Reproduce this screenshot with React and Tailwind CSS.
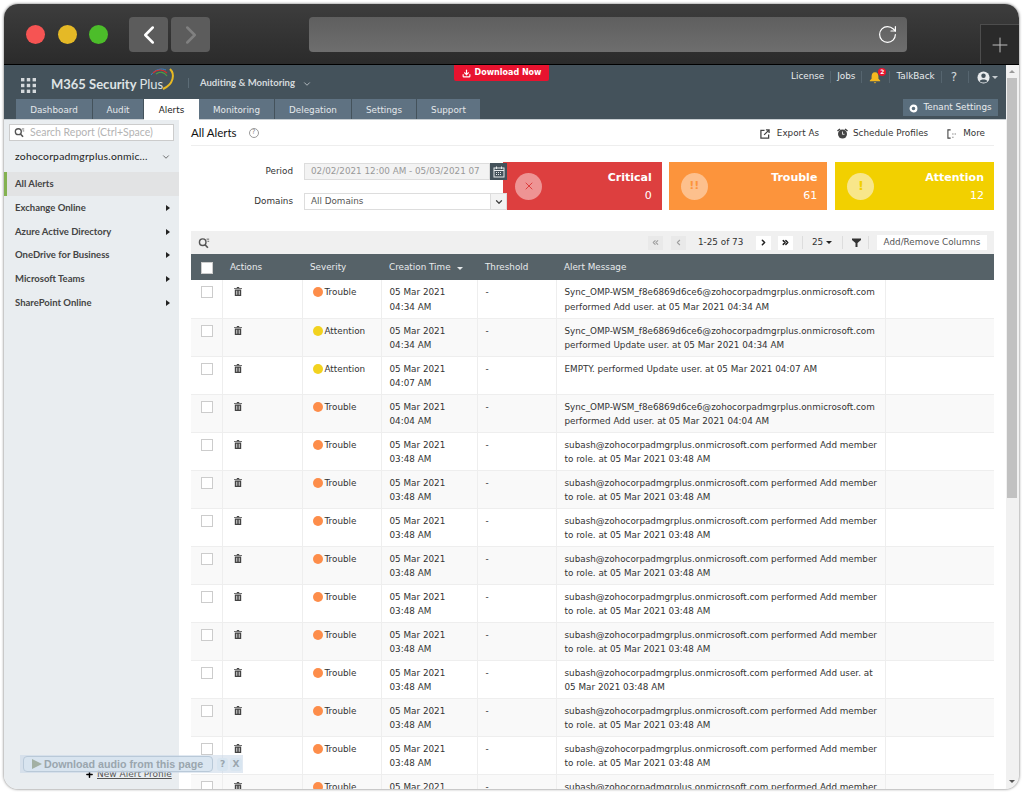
import { RotateCw, Plus, ChevronLeft, ChevronRight, ChevronsLeft, ChevronsRight, ChevronDown, X, Download } from "lucide-react";

const dejavu = "font-['DejaVu_Sans',sans-serif]";
const lato = "font-['Lato',sans-serif]";

const tabs = [
  { name: "Dashboard", w: "w-[76px]" },
  { name: "Audit", w: "w-[50px]" },
  { name: "Alerts", w: "w-[55px]", active: true },
  { name: "Monitoring", w: "w-[75px]" },
  { name: "Delegation", w: "w-[76px]" },
  { name: "Settings", w: "w-[64px]" },
  { name: "Support", w: "w-[63px]" },
];

const menu = ["Exchange Online", "Azure Active Directory", "OneDrive for Business", "Microsoft Teams", "SharePoint Online"];

const sync = "Sync_OMP-WSM_f8e6869d6ce6@zohocorpadmgrplus.onmicrosoft.com";
const subash = "subash@zohocorpadmgrplus.onmicrosoft.com performed Add member";
const memberRow = { sev: "Trouble", time: "03:48 AM", l1: subash, l2: "to role. at 05 Mar 2021 03:48 AM" };

const rows = [
  { sev: "Trouble", time: "04:34 AM", l1: sync, l2: "performed Add user. at 05 Mar 2021 04:34 AM" },
  { sev: "Attention", time: "04:34 AM", l1: sync, l2: "performed Update user. at 05 Mar 2021 04:34 AM" },
  { sev: "Attention", time: "04:07 AM", l1: "EMPTY. performed Update user. at 05 Mar 2021 04:07 AM" },
  { sev: "Trouble", time: "04:04 AM", l1: sync, l2: "performed Add user. at 05 Mar 2021 04:04 AM" },
  memberRow,
  memberRow,
  memberRow,
  memberRow,
  memberRow,
  memberRow,
  { sev: "Trouble", time: "03:48 AM", l1: "subash@zohocorpadmgrplus.onmicrosoft.com performed Add user. at", l2: "05 Mar 2021 03:48 AM" },
  memberRow,
  memberRow,
  memberRow,
];

function SearchIcon({ className }) {
  return (
    <svg viewBox="0 0 14 14" className={className} fill="none" stroke="currentColor">
      <circle cx="5.5" cy="6" r="3.8" strokeWidth="1.7" />
      <path d="M8.2 9 L11.5 12.5" strokeWidth="2" />
      <path d="M10 2.5h3M11 5h2" strokeWidth="1" />
    </svg>
  );
}

function Trash() {
  return (
    <svg viewBox="0 0 10 11" className="w-[8px] h-[9px] text-[#444]" fill="currentColor">
      <path d="M3.5 0h3v1H10v1.2H0V1h3.5z" />
      <path d="M1 3h8v8H1z M3 4.5v5h1v-5z M6 4.5v5h1v-5z" fillRule="evenodd" />
    </svg>
  );
}

function Card({ title, count, bg, circle, mark, ml = "" }) {
  return (
    <div className={`w-[159px] h-[48px] flex items-center pl-[12px] pr-[10px] ${bg} ${ml}`}>
      <div className={`w-[27px] h-[27px] rounded-full flex items-center justify-center shrink-0 ${circle}`}>{mark}</div>
      <div className="flex-1 text-right text-white pt-[2px]">
        <div className="text-[11px] font-bold leading-[14px]">{title}</div>
        <div className="text-[11px] leading-[14px] mt-[4px]">{count}</div>
      </div>
    </div>
  );
}

function PageBtn({ children, dim, className = "" }) {
  return (
    <span className={`w-[15px] h-[14px] flex items-center justify-center ${dim ? "bg-[#e9e9e9] text-[#a0a0a0]" : "bg-white text-[#222]"} ${className}`}>
      {children}
    </span>
  );
}

export default function App() {
  return (
    <div className={`w-[1024px] h-[793px] bg-white pl-[4px] pt-[4px] overflow-hidden ${dejavu}`}>
      <div className="relative w-[1015px] h-[785px] rounded-[14px] overflow-hidden flex flex-col bg-white shadow-[0_0_3px_rgba(0,0,0,0.6)]">

        {/* browser chrome */}
        <div className="h-[61px] shrink-0 bg-gradient-to-b from-[#3d3d3d] to-[#2b2b2b] border-b border-black flex items-start">
          <div className="flex gap-[12.5px] ml-[22px] mt-[21px]">
            <span className="w-[19px] h-[19px] rounded-full bg-[#f65453]" />
            <span className="w-[19px] h-[19px] rounded-full bg-[#e5b926]" />
            <span className="w-[19px] h-[19px] rounded-full bg-[#4cbd2a]" />
          </div>
          <div className="flex gap-[3px] ml-[21px] mt-[13px]">
            <span className="w-[39px] h-[35px] rounded-[4px] bg-[#5c5c5c] flex items-center justify-center">
              <ChevronLeft size={30} strokeWidth={2} className="text-white" />
            </span>
            <span className="w-[39px] h-[35px] rounded-[4px] bg-[#5c5c5c] flex items-center justify-center">
              <ChevronRight size={30} strokeWidth={2} className="text-[#808080]" />
            </span>
          </div>
          <div className="w-[599px] h-[35px] ml-[99px] mt-[13px] rounded-[4px] bg-gradient-to-b from-[#5f5f5f] to-[#6e6e6e] flex items-center justify-end pr-[9px]">
            <RotateCw size={21} strokeWidth={1.4} className="text-white" />
          </div>
          <div className="w-[39px] h-[40px] ml-[73px] mt-[20px] bg-[#2a2a2a] border-l border-t border-[#4d4d4d] flex items-center justify-center">
            <Plus size={24} strokeWidth={1} className="text-[#bdbdbd]" />
          </div>
        </div>

        <div className="flex flex-1 min-h-0">
          <div className="w-[1002px] flex flex-col min-h-0">

            {/* app header */}
            <div className="relative h-[55px] shrink-0 bg-[#44525b] border-b border-[#c9cfd3]">
              <div className="absolute left-[450px] top-0 w-[95px] h-[16px] bg-[#e8132f] rounded-b-[2px] flex items-center justify-center gap-[4px] text-white text-[8px] font-bold">
                <Download size={9} strokeWidth={3} />
                Download Now
              </div>
              <div className="h-[34px] flex items-start">
                <svg viewBox="0 0 15 15" className="w-[15px] h-[15px] ml-[17px] mt-[13px] text-[#d5d9dc]" fill="currentColor">
                  <rect x="0" y="0" width="3.4" height="3.4" /><rect x="5.8" y="0" width="3.4" height="3.4" /><rect x="11.6" y="0" width="3.4" height="3.4" />
                  <rect x="0" y="5.8" width="3.4" height="3.4" /><rect x="5.8" y="5.8" width="3.4" height="3.4" /><rect x="11.6" y="5.8" width="3.4" height="3.4" />
                  <rect x="0" y="11.6" width="3.4" height="3.4" /><rect x="5.8" y="11.6" width="3.4" height="3.4" /><rect x="11.6" y="11.6" width="3.4" height="3.4" />
                </svg>
                <div className="relative ml-[15px] mt-[7px] w-[129px]">
                  <span className={`${lato} text-[13px] font-bold text-[#dfe3e5] leading-[18px] whitespace-nowrap`}>
                    M365 Security <span className="font-normal">Plus</span>
                  </span>
                  <svg viewBox="0 0 28 24" className="absolute left-[99px] top-[-4px] w-[28px] h-[24px]" fill="none">
                    <path d="M1 7 C5 1 12 0 16 2" stroke="#3d7fc4" strokeWidth="1" />
                    <path d="M3 5 C7 1 13 1 17 5" stroke="#d3312f" strokeWidth="1.2" />
                    <path d="M6 6 C10 3 14 4 17 8" stroke="#4d9e44" strokeWidth="1.2" />
                    <path d="M20 1 C25 6 24 16 13 21" stroke="#e8b923" strokeWidth="2" />
                  </svg>
                </div>
                <span className="w-px h-[10px] bg-[#5c6c76] ml-[8px] mt-[13px]" />
                <span className={`${lato} ml-[11px] mt-[10px] text-[9.5px] font-bold text-[#d5dadd] leading-[16px] whitespace-nowrap`}>Auditing &amp; Monitoring</span>
                <ChevronDown size={10} className="text-[#c5cbcf] ml-[7px] mt-[14px]" />
                <div className="ml-auto mr-[8px] mt-[4px] h-[16px] flex items-center text-[8.8px] text-[#e8ebed] whitespace-nowrap">
                  <span>License</span>
                  <span className="w-px h-[12px] bg-[#56656f] mx-[6px]" />
                  <span>Jobs</span>
                  <span className="w-px h-[12px] bg-[#56656f] ml-[6px] mr-[7px]" />
                  <span className="relative w-[14px] h-[14px]">
                    <svg viewBox="0 0 14 14" className="w-[12px] h-[13px] mt-[1px]" fill="#f5b81f">
                      <path d="M7 1 C4 1 3 3.5 3 6 V8.5 L1 10.5 V11.5 H13 V10.5 L11 8.5 V6 C11 3.5 10 1 7 1z M5.5 12.5 H8.5 L7 14z" />
                    </svg>
                    <span className="absolute right-[-3px] top-[-2px] w-[8px] h-[8px] rounded-full bg-[#e8132f] text-white text-[6px] font-bold leading-[8px] text-center">2</span>
                  </span>
                  <span className="w-px h-[12px] bg-[#56656f] ml-[6px] mr-[6px]" />
                  <span>TalkBack</span>
                  <span className="w-px h-[12px] bg-[#56656f] mx-[6px]" />
                  <span className="text-[12px] text-[#d5dadd] mx-[3px]">?</span>
                  <span className="w-px h-[12px] bg-[#56656f] mx-[8px]" />
                  <svg viewBox="0 0 14 14" className="w-[13px] h-[13px]">
                    <circle cx="7" cy="7" r="6.5" fill="#e8ebed" />
                    <circle cx="7" cy="5.2" r="2.4" fill="#44525b" />
                    <path d="M2.8 11 C3.5 8.5 10.5 8.5 11.2 11 C9.5 12.8 4.5 12.8 2.8 11z" fill="#44525b" />
                  </svg>
                  <span className="ml-[2px] w-0 h-0 border-x-[3px] border-x-transparent border-t-[3px] border-t-[#c5cbcf]" />
                </div>
              </div>
              <div className="h-[20px] flex items-start pl-[12px] pr-[8px]">
                {tabs.map((t) => (
                  <div
                    key={t.name}
                    className={`${t.w} pt-[3px] flex items-center justify-center text-[8.8px] ${t.active ? "h-[21px] bg-white text-[#222]" : "h-[20px] mr-px bg-[#5f7282] text-[#e4e8eb]"}`}
                  >
                    {t.name}
                  </div>
                ))}
                <div className="ml-auto h-[17px] w-[95px] pt-px bg-[#5a6e7d] flex items-center justify-center gap-[5px] text-[8.8px] text-[#e8ebed] whitespace-nowrap">
                  <svg viewBox="0 0 10 10" className="w-[9px] h-[9px]" fill="none" stroke="#fff">
                    <circle cx="5" cy="5" r="3.2" strokeWidth="2.4" />
                  </svg>
                  Tenant Settings
                </div>
              </div>
            </div>

            <div className="flex flex-1 min-h-0">
              {/* sidebar */}
              <aside className={`w-[175px] shrink-0 bg-[#e9edf0] flex flex-col ${lato}`}>
                <div className="mx-[5px] mt-[4px] h-[17px] bg-white border border-[#ccc] flex items-center pl-[4px] gap-[5px]">
                  <SearchIcon className="w-[11px] h-[11px] text-[#555]" />
                  <span className="text-[10.5px] text-[#b3b3b3] whitespace-nowrap">Search Report (Ctrl+Space)</span>
                </div>
                <div className="h-[31px] pl-[11px] pr-[8px] flex items-center justify-between text-[10.4px] text-[#222]">
                  <span className="tracking-[0.2px]">zohocorpadmgrplus.onmic...</span>
                  <ChevronDown size={10} className="text-[#555]" />
                </div>
                <div className="h-[24px] bg-[#e2e3e4] border-l-[3px] border-[#84b251] pl-[8px] flex items-center text-[9.5px] font-bold text-[#444]">All Alerts</div>
                {menu.map((m) => (
                  <div key={m} className="h-[23.8px] pl-[11px] pr-[9px] flex items-center justify-between text-[9.5px] font-bold text-[#444]">
                    {m}
                    <span className="w-0 h-0 border-y-[3px] border-y-transparent border-l-[4px] border-l-[#222]" />
                  </div>
                ))}
                <div className="mt-auto mb-[8px] ml-[81px] flex items-center gap-[3px] text-[9px] text-[#555] font-['DejaVu_Sans',sans-serif]">
                  <Plus size={9} strokeWidth={4} className="text-black" />
                  <span className="underline">New Alert Profile</span>
                </div>
              </aside>

              {/* main */}
              <main className="w-[827px] px-[12px] min-h-0 overflow-hidden">
                <div className="h-[26px] flex items-center border-b border-[#eee]">
                  <span className={`${lato} text-[11.5px] text-[#111] pt-[1px]`}>All Alerts</span>
                  <span className="ml-[12px] w-[10px] h-[10px] rounded-full border border-[#999] text-[7px] text-[#888] flex items-center justify-center">?</span>
                  <div className="ml-auto flex items-center text-[8.8px] text-[#333] whitespace-nowrap pr-[9px] pt-[2px]">
                    <svg viewBox="0 0 11 11" className="w-[10px] h-[10px] mr-[7px]" fill="none" stroke="#444" strokeWidth="1.4">
                      <path d="M5 1.5H1V10H9.5V6" /><path d="M4.5 6.5L9.5 1.5M6.5 1h3.5v3.5" />
                    </svg>
                    Export As
                    <svg viewBox="0 0 11 11" className="w-[11px] h-[11px] ml-[18px] mr-[5px]" fill="#444">
                      <circle cx="5.5" cy="6" r="4.5" /><path d="M0 2.5L2.5 0.5L3.5 1.5L1 3.5z M11 2.5L8.5 0.5L7.5 1.5L10 3.5z" />
                      <path d="M5.5 3.5V6.3H7.5" stroke="#fff" strokeWidth="0.8" fill="none" />
                    </svg>
                    Schedule Profiles
                    <svg viewBox="0 0 11 11" className="w-[10px] h-[10px] ml-[19px] mr-[6px]" fill="none" stroke="#444" strokeWidth="1.2">
                      <path d="M4 1H1V10H4" /><path d="M6 5.5H7M8.5 5.5H9.5M6 9H7" />
                    </svg>
                    More
                  </div>
                </div>

                <div className="h-[85px] flex items-start pt-[16px]">
                  <div className="relative z-10 w-[316px] shrink-0 pt-[1px] text-[8.8px] text-[#333]">
                    <div className="flex items-center h-[17px]">
                      <span className="w-[113px] pt-px text-right pr-[11px]">Period</span>
                      <div className="w-[186px] h-[17px] pt-px bg-[#f3f3f3] border border-[#ddd] pl-[6px] flex items-center text-[#999] whitespace-nowrap overflow-hidden">02/02/2021 12:00 AM - 05/03/2021 07</div>
                      <div className="w-[17px] h-[17px] bg-[#44525b] flex items-center justify-center">
                        <svg viewBox="0 0 12 12" className="w-[12px] h-[12px]" fill="none" stroke="#e8ebed">
                          <rect x="1" y="2" width="10" height="9" />
                          <path d="M3.5 0.5v2.5M8.5 0.5v2.5M1 4.5h10" />
                          <path d="M3 6.5h6M3 8.5h6" strokeDasharray="1 1" />
                        </svg>
                      </div>
                    </div>
                    <div className="flex items-center h-[17px] mt-[13px]">
                      <span className="w-[113px] pt-px text-right pr-[11px]">Domains</span>
                      <div className="w-[187px] h-[17px] pt-px bg-white border border-[#ddd] pl-[6px] flex items-center text-[#555]">All Domains</div>
                      <div className="w-[16px] h-[17px] bg-[#f3f3f3] border border-l-0 border-[#ddd] flex items-center justify-center">
                        <ChevronDown size={10} strokeWidth={3} className="text-[#444]" />
                      </div>
                    </div>
                  </div>
                  <Card ml="-ml-[4px]" title="Critical" count="0" bg="bg-[#dd3f3f]" circle="bg-[#ee9494]" mark={<X size={12} strokeWidth={2} className="text-[#dd3f3f]" />} />
                  <Card ml="ml-[7px]" title="Trouble" count="61" bg="bg-[#fc943c]" circle="bg-[#fdc08d]" mark={<span className="text-[#fc943c] text-[11px] font-bold">!!</span>} />
                  <Card ml="ml-[8px]" title="Attention" count="12" bg="bg-[#f2d000]" circle="bg-[#f8e68a]" mark={<span className="text-[#f2d000] text-[13px] font-bold">!</span>} />
                </div>

                {/* grid toolbar */}
                <div className="h-[23px] bg-[#f0f0f0] flex items-center text-[8.8px] text-[#333] pr-[7px]">
                  <SearchIcon className="w-[12px] h-[12px] ml-[7px] text-[#555]" />
                  <PageBtn dim className="ml-auto"><ChevronsLeft size={9} strokeWidth={3} /></PageBtn>
                  <PageBtn dim className="ml-[8px]"><ChevronLeft size={9} strokeWidth={3} /></PageBtn>
                  <span className="ml-[12px] w-[47px] whitespace-nowrap">1-25 of 73</span>
                  <PageBtn className="ml-[11px]"><ChevronRight size={9} strokeWidth={4} /></PageBtn>
                  <PageBtn className="ml-[7px]"><ChevronsRight size={9} strokeWidth={4} /></PageBtn>
                  <span className="w-px h-[13px] bg-[#ddd] ml-[9px]" />
                  <span className="ml-[9px] w-[20px] flex items-center gap-[3px]">
                    25
                    <span className="w-0 h-0 border-x-[3px] border-x-transparent border-t-[3px] border-t-[#222]" />
                  </span>
                  <span className="w-px h-[13px] bg-[#ddd] ml-[10px]" />
                  <svg viewBox="0 0 9 9" className="w-[9px] h-[9px] ml-[9px]" fill="#333"><path d="M0 0.5H9V2L5.5 5V9H3.5V5L0 2z" /></svg>
                  <span className="w-px h-[13px] bg-[#ddd] ml-[7px]" />
                  <span className="ml-[8px] w-[110px] h-[15px] bg-white flex items-center justify-center text-[#555] whitespace-nowrap">Add/Remove Columns</span>
                </div>

                <table className="w-[803px] table-fixed border-collapse text-[8.8px] text-[#333]">
                  <colgroup>
                    <col className="w-[31px]" />
                    <col className="w-[80px]" />
                    <col className="w-[79px]" />
                    <col className="w-[96px]" />
                    <col className="w-[79px]" />
                    <col className="w-[329px]" />
                    <col className="w-[109px]" />
                  </colgroup>
                  <thead>
                    <tr className="h-[26px] bg-[#566268] text-[#e8ebed] text-left">
                      <th className="pl-[10px] pt-px font-normal"><span className="block w-[12px] h-[12px] bg-white border border-[#ccc]" /></th>
                      <th className="pl-[8px] pt-[2px] font-normal">Actions</th>
                      <th className="pl-[8px] pt-[2px] font-normal">Severity</th>
                      <th className="pl-[8px] pt-[2px] font-normal">
                        <span className="flex items-center gap-[6px]">Creation Time<span className="w-0 h-0 border-x-[3px] border-x-transparent border-t-[3px] border-t-[#e8ebed]" /></span>
                      </th>
                      <th className="pl-[8px] pt-[2px] font-normal">Threshold</th>
                      <th className="pl-[8px] pt-[2px] font-normal">Alert Message</th>
                      <th />
                    </tr>
                  </thead>
                  <tbody>
                    {rows.map((r, i) => (
                      <tr key={i} className={`h-[38px] border-b border-[#eee] align-top ${i % 2 ? "bg-[#f9f9f9]" : "bg-white"}`}>
                        <td className="pl-[10px] pt-[6px]"><span className="block w-[12px] h-[12px] bg-white border border-[#ccc]" /></td>
                        <td className="pl-[11px] pt-[7px] border-l border-[#eee]"><Trash /></td>
                        <td className="pl-[10px] pt-[5px] border-l border-[#eee]">
                          <span className="flex items-center gap-[2px] leading-[14px]">
                            <span className={`w-[10px] h-[10px] rounded-full ${r.sev === "Trouble" ? "bg-[#fd8d4a]" : "bg-[#f2d21f]"}`} />
                            {r.sev}
                          </span>
                        </td>
                        <td className="pl-[8px] pt-[5px] leading-[14.5px] border-l border-[#eee]">05 Mar 2021<br />{r.time}</td>
                        <td className="pl-[8px] pt-[5px] leading-[14.5px] border-l border-[#eee]">-</td>
                        <td className="pl-[8px] pt-[5px] leading-[14.5px] border-l border-[#eee] whitespace-nowrap">
                          {r.l1}{r.l2 && <br />}{r.l2}
                        </td>
                        <td className="border-l border-[#eee]" />
                      </tr>
                    ))}
                  </tbody>
                </table>
              </main>
            </div>
          </div>

          {/* page scrollbar */}
          <div className="w-[13px] shrink-0 bg-[#f1f1f1] flex flex-col items-start pl-px">
            <span className="ml-[2px] mt-[5px] w-0 h-0 border-x-[3px] border-x-transparent border-b-[3px] border-b-[#999]" />
            <span className="mt-[5px] w-[10px] h-[420px] bg-[#c1c1c1]" />
            <span className="ml-[2px] mt-auto mb-[6px] w-0 h-0 border-x-[3px] border-x-transparent border-t-[3px] border-t-[#555]" />
          </div>
        </div>

        {/* floating audio download bar */}
        <div className="absolute left-[16px] top-[751px] w-[223px] h-[18px] bg-[#c3d4e6]/50 flex items-center pl-[3px] gap-[2px]">
          <div className="w-[190px] h-[16px] rounded-[4px] bg-[#d8e5f0]/80 border border-[#b9c9d8] flex items-center pl-[8px] gap-[2px] text-[#9aa6ae] text-[10.7px] font-bold whitespace-nowrap font-['Liberation_Sans',sans-serif]">
            <span className="w-0 h-0 border-y-[5px] border-y-transparent border-l-[10px] border-l-[#a3b0a3]" />
            Download audio from this page
          </div>
          <span className="ml-[2px] w-[11px] h-[13px] rounded-[3px] bg-[#d8e5f0] text-[#9aa6ae] text-[9px] font-bold text-center leading-[13px]">?</span>
          <span className="w-[12px] h-[13px] rounded-[3px] bg-[#d8e5f0] text-[#9aa6ae] text-[9px] font-bold text-center leading-[13px]">X</span>
        </div>
      </div>
    </div>
  );
}
